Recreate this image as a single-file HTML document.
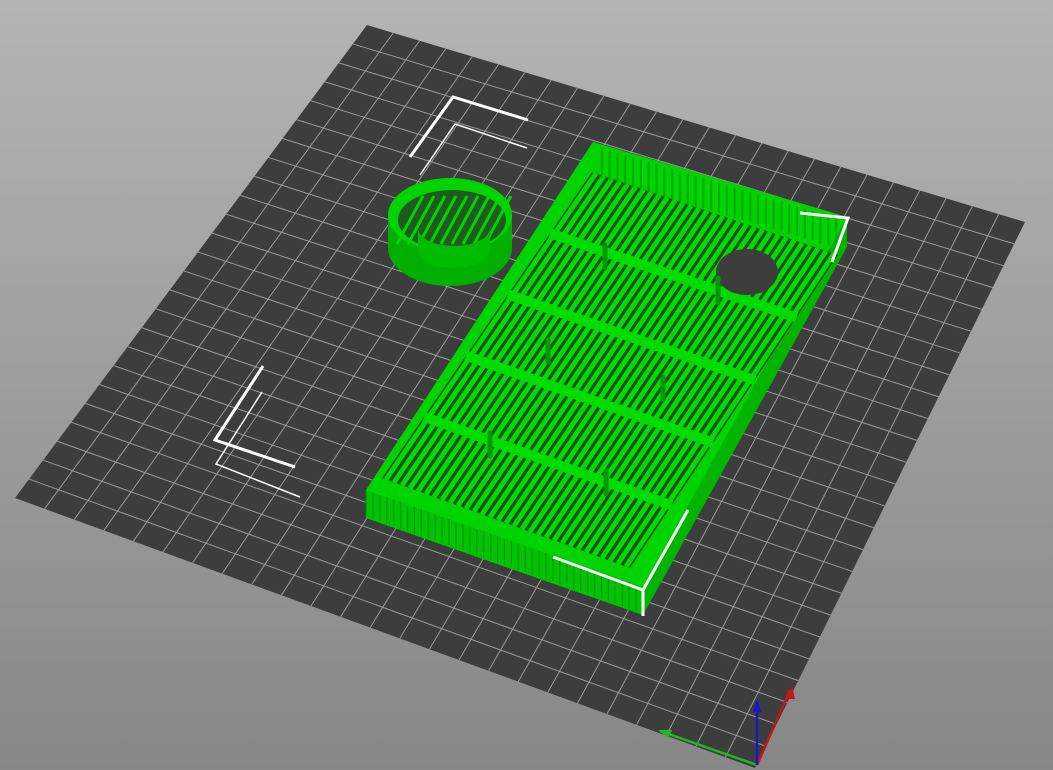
<!DOCTYPE html>
<html><head><meta charset="utf-8"><style>
html,body{margin:0;padding:0;width:1053px;height:770px;overflow:hidden}
body{background:linear-gradient(#b3b3b3,#8a8a8a)}
svg{display:block}
</style></head><body>
<svg id="s" width="1053" height="770" viewBox="0 0 1053 770" xmlns="http://www.w3.org/2000/svg">
<defs><linearGradient id="bg" x1="0" y1="0" x2="0" y2="1"><stop offset="0" stop-color="#b4b4b4"/><stop offset="1" stop-color="#878787"/></linearGradient></defs>
<rect width="1053" height="770" fill="url(#bg)"/>
<polygon points="367,25 1025,222 755,768 15,498" fill="#3d3d3d"/>
<g id="grid" stroke="#9a9a9a" stroke-width="1"></g>
<!-- cup -->
<ellipse cx="450" cy="248" rx="62" ry="38" fill="#00b000"/>
<rect x="388" y="215" width="124" height="33" fill="#00b000"/>
<ellipse cx="450" cy="215" rx="62" ry="37" fill="#00d400"/>
<ellipse cx="452" cy="220" rx="54" ry="30" fill="#1f5a1f"/>
<g id="cupsl" stroke="#00d400" stroke-width="3"></g>
<path d="M418,228 A36,18 0 0 0 490,228 L490,250 A36,18 0 0 1 418,250 Z" fill="#00bc00"/>
<circle cx="508" cy="245" r="3" fill="#00b000"/>
<!-- tray -->
<polygon points="593,142 847,217 847,247 643,615 366,518 366,490" fill="#00b400"/>
<polygon points="366,490 643,587 643,615 366,518" fill="#00c400"/>
<g id="fr" stroke="#008a00" stroke-width="1"></g>
<polygon points="593,142 847,217 643,587 366,490" fill="#00d400"/>
<polygon points="592,172 838,255 630,568 382,478" fill="#1e4d1e"/>
<g id="sl" stroke="#00dc00" stroke-width="5"></g>
<g id="cb" stroke="#00dc00" stroke-width="10"></g>
<g id="rib" stroke="#00a800" stroke-width="2"></g>
<ellipse cx="747" cy="272" rx="31" ry="23" fill="#3d3d3d"/>
<g stroke="#009800" stroke-width="5" stroke-linecap="round">
<line x1="605" y1="245" x2="605" y2="268"/><line x1="718" y1="278" x2="718" y2="303"/>
<line x1="548" y1="340" x2="548" y2="362"/><line x1="663" y1="377" x2="663" y2="400"/>
<line x1="490" y1="433" x2="490" y2="456"/><line x1="606" y1="471" x2="606" y2="494"/>
</g>
<!-- white marks -->
<g stroke="#fff" fill="none" stroke-width="3">
<polyline points="553,557 643,590 688,510"/>
<polyline points="800,213 848,218 832,262"/>
<line x1="643" y1="590" x2="643" y2="616"/>
<polyline points="528,120 453,97 410,157"/>
<polyline points="263,366 215,440 295,467"/>
</g>
<g stroke="#fff" fill="none" stroke-width="1.5">
<polyline points="527,148 455,124 420,175"/>
<polyline points="262,392 216,464 300,497"/>
</g>
<!-- axes -->
<g stroke-width="2.5" fill="none">
<line x1="757" y1="765" x2="660" y2="731" stroke="#22b822"/>
<line x1="757" y1="765" x2="790" y2="690" stroke="#c01818"/>
<line x1="757" y1="765" x2="757" y2="702" stroke="#1818c0"/>
</g>
<polygon points="658,730 672,730 668,738" fill="#22b822"/>
<polygon points="792,686 786,699 795,699" fill="#c01818"/>
<polygon points="757,698 753,712 761,712" fill="#1818c0"/>
</svg>
<script>
var NS="http://www.w3.org/2000/svg";
function L(g,x1,y1,x2,y2){var l=document.createElementNS(NS,"line");l.setAttribute("x1",x1);l.setAttribute("y1",y1);l.setAttribute("x2",x2);l.setAttribute("y2",y2);document.getElementById(g).appendChild(l);}
function lerp(a,b,t){return[a[0]+(b[0]-a[0])*t,a[1]+(b[1]-a[1])*t];}
var TL=[367,25],TR=[1025,222],BR=[755,768],BL=[15,498],N=25;
for(var i=1;i<N;i++){var t=i/N;var a=lerp(TL,TR,t),b=lerp(BL,BR,t);L("grid",a[0],a[1],b[0],b[1]);a=lerp(TL,BL,t);b=lerp(TR,BR,t);L("grid",a[0],a[1],b[0],b[1]);}
var F1=[592,172],F2=[838,255],F3=[630,568],F4=[382,478];
var M=30;
for(var i=0;i<=M;i++){var t=(i+0.5)/(M+1);var a=lerp(F1,F2,t),b=lerp(F4,F3,t);L("sl",a[0],a[1],b[0],b[1]);}
for(var i=1;i<5;i++){var t=i/5;var a=lerp(F1,F4,t),b=lerp(F2,F3,t);L("cb",a[0],a[1],b[0],b[1]);}
for(var i=0;i<=30;i++){var t=(i+0.5)/31;var a=lerp([598,147],[840,219],t);L("rib",a[0],a[1],a[0],a[1]+30);}
for(var i=0;i<=40;i++){var t=i/40;var a=lerp([366,490],[643,587],t);L("fr",a[0],a[1],a[0],a[1]+26);}
for(var i=0;i<9;i++){var x=405+i*11;L("cupsl",x+18,196,x-8,244);}
</script>
</body></html>
